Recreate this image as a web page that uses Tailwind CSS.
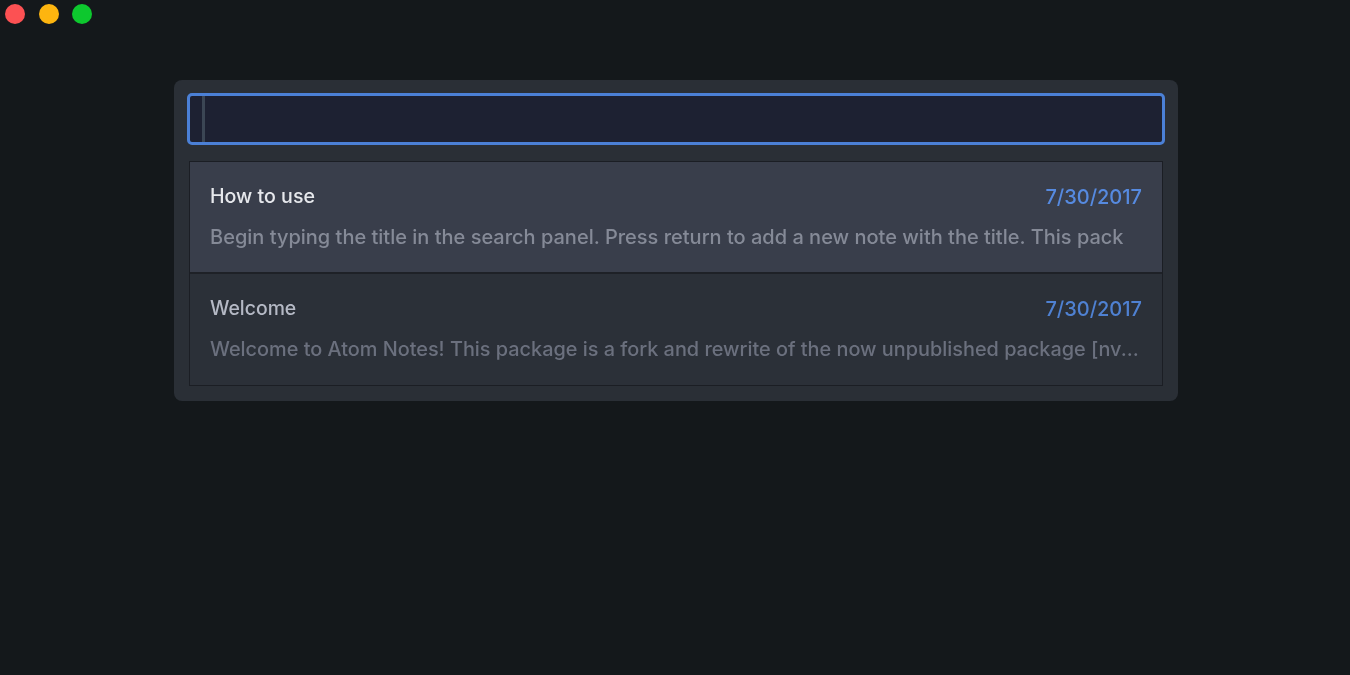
<!doctype html>
<html>
<head>
<meta charset="utf-8">
<script src="https://cdn.jsdelivr.net/npm/@tailwindcss/browser@4"></script>
<title>Atom Notes</title>
</head>
<body class="bg-[#14181b] h-[675px] overflow-hidden font-['Inter','Liberation_Sans',sans-serif]">
  <div class="blur-[0.5px]">
    <!-- window controls -->
    <div class="flex gap-[13.5px] pl-[5px] pt-[4px]">
      <span class="w-5 h-5 rounded-full bg-[#fc5153]"></span>
      <span class="w-5 h-5 rounded-full bg-[#fdb50f]"></span>
      <span class="w-5 h-5 rounded-full bg-[#0dc82e]"></span>
    </div>

    <!-- search panel -->
    <div class="w-[1004px] h-[321px] ml-[174px] mt-[56px] p-[13px] bg-[#2a2f36] rounded-[8px]">
      <div class="h-[52px] border-[3px] border-[#4b80d6] rounded-[5px] bg-[#1d2132] pl-[12px]">
        <div class="w-[3px] h-full bg-[#3b4654]"></div>
      </div>

      <div class="mt-[16px] mx-[2px] border border-[#1b1e24]">
        <div class="h-[112px] px-[20px] pt-[21px] bg-[#393e4b] border-b-2 border-[#1e2127]">
          <div class="flex justify-between items-center h-[28px]">
            <span class="font-[550] text-[19.6px] text-[#e6e8ec]">How to use</span>
            <span class="font-medium text-[20px] text-[#568ae0]">7/30/2017</span>
          </div>
          <p class="mt-[12px] h-[28px] leading-[28px] text-[20px] font-[450] text-[#858a97] whitespace-nowrap">Begin typing the title in the search panel. Press return to add a new note with the title. This pack</p>
        </div>
        <div class="h-[111px] px-[20px] pt-[21px] bg-[#2b3038]">
          <div class="flex justify-between items-center h-[28px]">
            <span class="font-[550] text-[19.4px] text-[#b5b9c5]">Welcome</span>
            <span class="font-medium text-[20px] text-[#4f81d2]">7/30/2017</span>
          </div>
          <p class="mt-[12px] h-[28px] leading-[28px] text-[19.87px] font-[450] text-[#6b707e] whitespace-nowrap">Welcome to Atom Notes! This package is a fork and rewrite of the now unpublished package [nv...</p>
        </div>
      </div>
    </div>
  </div>
</body>
</html>
